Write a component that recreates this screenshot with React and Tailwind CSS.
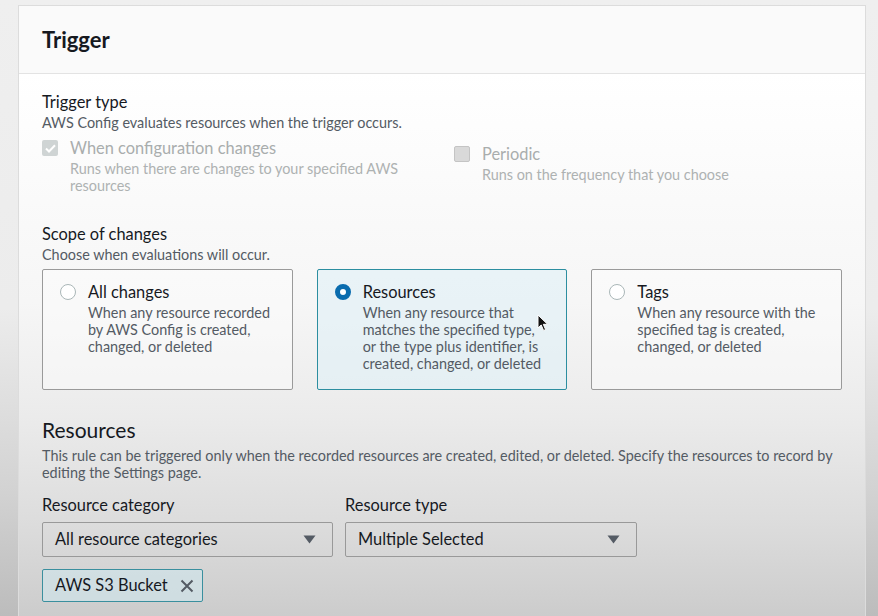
import React from 'react';

const font = { fontFamily: 'Lato, "Noto Sans", sans-serif' };

const Caret = () => (
  <svg width="13" height="9" viewBox="0 0 13 9" className="shrink-0">
    <path d="M0.5 0.5 L12.5 0.5 L6.5 8.5 Z" fill="#545b64" />
  </svg>
);

const Radio = ({ checked }) =>
  checked ? (
    <span className="mt-[2px] h-[16px] w-[16px] shrink-0 rounded-full border-[5px] border-[#0a6cae] bg-white" />
  ) : (
    <span className="mt-[2px] h-[16px] w-[16px] shrink-0 rounded-full border-[1.5px] border-[#aab7b8] bg-white" />
  );

const Tile = ({ title, lines, checked }) => (
  <div
    className={
      'flex h-[121px] gap-[12px] rounded-[2px] border px-[17px] pt-[12px] ' +
      (checked ? 'border-[#2c8ea0] bg-[#dff0f6]/60' : 'border-[#9a9a9a] bg-white/40')
    }
  >
    <Radio checked={checked} />
    <div>
      <div className="text-[16.4px] leading-[20px] text-[#16191f]">{title}</div>
      <div className="mt-[2px] text-[14.4px] leading-[17px] text-[#545b64]">
        {lines.map((l, i) => (
          <div key={i} className="whitespace-nowrap">{l}</div>
        ))}
      </div>
    </div>
  </div>
);

const Select = ({ value }) => (
  <div className="flex h-[35px] items-center justify-between rounded-[2px] border border-[#999] pl-[12px] pr-[16px]">
    <span className="text-[16.4px] text-[#16191f]">{value}</span>
    <Caret />
  </div>
);

export default function App() {
  return (
    <div
      style={font}
      className="h-[616px] overflow-hidden bg-[linear-gradient(180deg,#efefef_0%,#ececec_50%,#d2d2d2_80%,#bcbcbc_100%)] pl-[18px] pr-[12px] pt-[5px]"
    >
      <div className="relative flex h-[640px] flex-col border border-[#dcdcdc] border-b-0">
        <div className="flex h-[68px] shrink-0 items-center border-b border-[#e3e3e3] bg-[#fafafa] px-[23px]">
          <h1 className="text-[22px] font-bold text-[#16191f]">Trigger</h1>
        </div>

        <div className="flex-1 bg-[linear-gradient(180deg,#ffffff_0%,#f6f6f6_40%,#ebebeb_60%,#dcdcdc_79%,#c7c7c7_100%)] px-[23px] pt-[18px]">
          <div className="text-[16.4px] leading-[20px] text-[#16191f]">Trigger type</div>
          <div className="mt-[2px] text-[14.4px] leading-[17px] text-[#545b64]">
            AWS Config evaluates resources when the trigger occurs.
          </div>

          <div className="mt-[7px] grid grid-cols-2 gap-[24px]">
            <div className="flex gap-[12px]">
              <span className="mt-[2px] flex h-[16px] w-[16px] shrink-0 items-center justify-center rounded-[2px] bg-[#cfd4d4]">
                <svg width="11" height="9" viewBox="0 0 11 9">
                  <path d="M1 4.5 L4 7.5 L10 1.2" fill="none" stroke="#fff" strokeWidth="2" />
                </svg>
              </span>
              <div>
                <div className="text-[16.4px] leading-[20px] text-[#a9adad]">When configuration changes</div>
                <div className="mt-[2px] text-[14.4px] leading-[17px] text-[#aeb2b2]">
                  Runs when there are changes to your specified AWS
                  <br />
                  resources
                </div>
              </div>
            </div>
            <div className="mt-[6px] flex gap-[12px]">
              <span className="mt-[2px] h-[16px] w-[16px] shrink-0 rounded-[2px] border border-[#c4c4c4] bg-[#d9d9d9]" />
              <div>
                <div className="text-[16.4px] leading-[20px] text-[#a9adad]">Periodic</div>
                <div className="mt-[2px] text-[14.4px] leading-[17px] text-[#aeb2b2]">
                  Runs on the frequency that you choose
                </div>
              </div>
            </div>
          </div>

          <div className="mt-[30px] text-[16.4px] leading-[20px] text-[#16191f]">Scope of changes</div>
          <div className="mt-[2px] text-[14.4px] leading-[17px] text-[#545b64]">Choose when evaluations will occur.</div>

          <div className="relative mt-[6px] grid grid-cols-3 gap-[24px]">
            <Tile
              title="All changes"
              lines={['When any resource recorded', 'by AWS Config is created,', 'changed, or deleted']}
            />
            <Tile
              checked
              title="Resources"
              lines={[
                'When any resource that',
                'matches the specified type,',
                'or the type plus identifier, is',
                'created, changed, or deleted',
              ]}
            />
            <Tile
              title="Tags"
              lines={['When any resource with the', 'specified tag is created,', 'changed, or deleted']}
            />
            <svg
              width="12"
              height="18"
              viewBox="0 0 12 18"
              className="pointer-events-none absolute left-[495px] top-[45px]"
            >
              <path d="M1 1 L1 14 L4.2 11 L6.6 16.5 L8.6 15.6 L6.3 10.3 L10.6 10.3 Z" fill="#111" stroke="#fff" strokeWidth="1" />
            </svg>
          </div>

          <h2 className="mt-[28px] text-[21px] leading-[24px] text-[#16191f]">Resources</h2>
          <div className="mt-[5px] text-[14.4px] leading-[17px] text-[#545b64]">
            <span className="whitespace-nowrap">
              This rule can be triggered only when the recorded resources are created, edited, or deleted. Specify the
              resources to record by
            </span>
            <br />
            editing the Settings page.
          </div>

          <div className="mt-[14px] flex gap-[12px]">
            <div className="w-[291px]">
              <div className="text-[16.4px] leading-[20px] text-[#16191f]">Resource category</div>
              <div className="mt-[7px]">
                <Select value="All resource categories" />
              </div>
            </div>
            <div className="w-[292px]">
              <div className="text-[16.4px] leading-[20px] text-[#16191f]">Resource type</div>
              <div className="mt-[7px]">
                <Select value="Multiple Selected" />
              </div>
            </div>
          </div>

          <div className="mt-[12px] flex">
            <div className="flex h-[33px] items-center gap-[12px] rounded-[2px] border border-[#3a8f9e] bg-[#cfe6ec]/60 pl-[12px] pr-[8px]">
              <span className="text-[16.4px] text-[#16191f]">AWS S3 Bucket</span>
              <svg width="14" height="14" viewBox="0 0 14 14">
                <path d="M1.5 1.5 L12.5 12.5 M12.5 1.5 L1.5 12.5" stroke="#545b64" strokeWidth="2" />
              </svg>
            </div>
          </div>
        </div>
      </div>
    </div>
  );
}
